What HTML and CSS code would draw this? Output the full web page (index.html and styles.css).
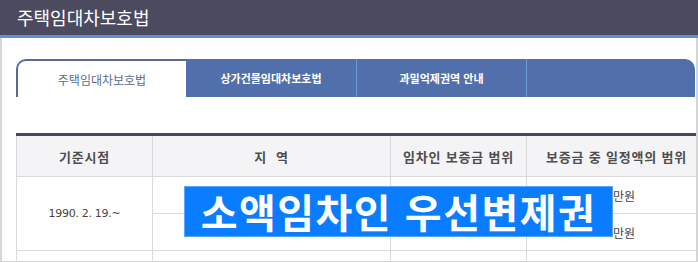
FILE: index.html
```html
<!DOCTYPE html>
<html lang="ko">
<head>
<meta charset="utf-8">
<link rel="stylesheet" href="styles.css">
</head>
<body>
<div class="frame">
  <header class="topbar"><h1 class="title">주택임대차보호법</h1></header>
  <div class="content">
    <nav class="tabs">
      <div class="tab active">주택임대차보호법</div>
      <div class="tab">상가건물임대차보호법</div>
      <div class="tab">과밀억제권역 안내</div>
      <div class="tab last"></div>
    </nav>
    <div class="table-wrap">
      <table class="law">
        <colgroup><col class="c1"><col class="c2"><col class="c3"><col class="c4"></colgroup>
        <thead>
          <tr><th>기준시점</th><th class="wide">지&nbsp;&nbsp;역</th><th>임차인 보증금 범위</th><th>보증금 중 일정액의 범위</th></tr>
        </thead>
        <tbody>
          <tr><td rowspan="2" class="date">1990. 2. 19.~</td><td></td><td></td><td class="amt">만원</td></tr>
          <tr><td></td><td></td><td class="amt">만원</td></tr>
          <tr class="next"><td></td><td></td><td></td><td></td></tr>
        </tbody>
      </table>
      <div class="banner">소액임차인 우선변제권</div>
    </div>
  </div>
</div>
</body>
</html>
```

FILE: styles.css
```css
html, body {
  margin: 0;
  padding: 0;
  background: #ffffff;
}
.frame {
  width: 698px;
  height: 262px;
  overflow: hidden;
  box-sizing: border-box;
  border-bottom: 1px solid #d4d4d4;
  font-family: "Noto Sans CJK KR", "Noto Sans", sans-serif;
}
.topbar {
  height: 35px;
  background: #4b4a5f;
  border-bottom: 3px solid #5b94c6;
  display: flex;
  align-items: center;
  padding-left: 17px;
}
.title {
  margin: 0;
  font-size: 18px;
  font-weight: 400;
  color: #ffffff;
  line-height: 1;
  margin-top: -2px;
}
.content {
  height: 223px;
  box-sizing: border-box;
  border-left: 2px solid #d6d6d6;
  border-right: 2px solid #d6d6d6;
  padding: 21px 0 0 14px;
  overflow: hidden;
}
.tabs {
  display: flex;
  width: 679px;
  height: 38px;
}
.tab {
  width: 170px;
  box-sizing: border-box;
  background: #5170ab;
  color: #ffffff;
  font-size: 11px;
  font-weight: 700;
  display: flex;
  align-items: center;
  justify-content: center;
  border-left: 1px solid #6a9ad8;
}
.tab.active {
  background: #ffffff;
  color: #5b6a8f;
  font-size: 12px;
  font-weight: 400;
  border-left: 2px solid #5a6a98;
  border-top: 2px solid #5a6a98;
  border-top-left-radius: 10px;
}
.tab.active + .tab {
  border-left: 0;
}
.tab.last {
  flex: 1;
  border-top-right-radius: 10px;
}
.table-wrap {
  position: relative;
  margin-top: 36px;
  width: 700px;
}
.law {
  border-collapse: collapse;
  table-layout: fixed;
  width: 690px;
  border-top: 3px solid #4a4858;
}
.c1 { width: 136px; }
.c2 { width: 238px; }
.c3 { width: 136px; }
.c4 { width: 180px; }
.law th {
  height: 40px;
  background: #f4f4f6;
  color: #4e4e4e;
  font-size: 13px;
  font-weight: 700;
  border: 1px solid #dadada;
  border-top: 0;
  padding: 0;
  letter-spacing: 0.8px;
}
.law td {
  height: 36px;
  border: 1px solid #dadada;
  text-align: center;
  font-size: 12px;
  color: #333333;
  padding: 0;
}
.law td.amt {
  text-align: left;
  padding-left: 86px;
  color: #444444;
}
.law td.date {
  color: #444444;
  font-family: "DejaVu Sans", sans-serif;
  font-size: 11px;
  letter-spacing: -0.3px;
}
.law tr.next td {
  height: 20px;
}
.banner {
  position: absolute;
  left: 168px;
  top: 53px;
  width: 427px;
  height: 49px;
  background: #0a7cff;
  border: 1px solid #58a6ff;
  color: #ffffff;
  font-size: 40px;
  font-weight: 700;
  line-height: 49px;
  text-align: center;
  letter-spacing: 1.5px;
}
```
